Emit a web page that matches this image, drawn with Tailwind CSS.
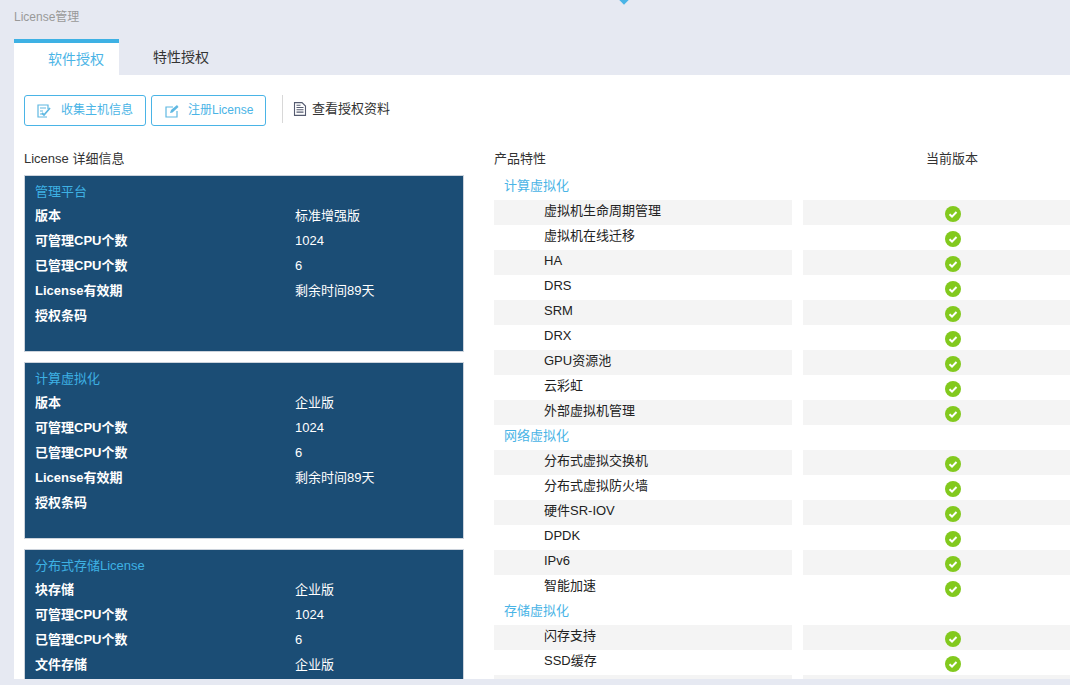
<!DOCTYPE html>
<html lang="zh-CN">
<head>
  <meta charset="UTF-8" />
  <title>License管理</title>
  <script src="https://cdn.jsdelivr.net/npm/@tailwindcss/browser@4"></script>
</head>
<body class="relative h-[685px] overflow-hidden bg-[#e6e9f2] font-['Liberation_Sans','Noto_Sans_CJK_SC',sans-serif] text-[13px] text-[#333]">

  <!-- marker at top -->
  <div class="absolute left-[620px] top-[-5px] h-2 w-2 rotate-45 bg-[#4ab4e6]"></div>

  <!-- Breadcrumb -->
  <div class="h-[39px] pl-[14px] pt-[9px] text-xs leading-[16px] text-[#999]">License管理</div>

  <!-- Tabs -->
  <div class="flex h-9 pl-[14px] text-sm">
    <div class="w-[105px] border-t-4 border-[#3eb1e4] bg-white pl-[34px] pt-[5px] leading-[23px] text-[#4ab4e6]">软件授权</div>
    <div class="pl-[34px] pt-[7px] leading-[23px] text-[#333]">特性授权</div>
  </div>

  <!-- Panel -->
  <div class="ml-[14px] h-[604px] overflow-hidden bg-white pl-[10px]">

    <!-- Toolbar -->
    <div class="flex items-start pt-5">
      <button class="flex h-[31px] w-[122px] items-center rounded-[3px] border border-[#4ab4e6] pl-[11px] text-xs text-[#4ab4e6]">
        <svg class="h-4 w-4" viewBox="0 0 16 16" fill="none" stroke="#5fb8e2" stroke-width="1.2"><path d="M12 6V2H2v12h9" /><path d="M4 5h6M4 8h3M4 11h3" /><path d="M6 10l2 2 6-7" stroke-width="1.8" /></svg>
        <span class="ml-[9px] pb-[2px]">收集主机信息</span>
      </button>
      <button class="ml-[5px] flex h-[31px] w-[115px] items-center rounded-[3px] border border-[#4ab4e6] pl-[12px] text-xs text-[#4ab4e6]">
        <svg class="h-4 w-4" viewBox="0 0 16 16" fill="none" stroke="#5fb8e2" stroke-width="1.2"><path d="M9 4H2v10h11V8" /><path d="M6 10l1-3 6-5 1.500 2-6 5.500z" fill="#5fb8e2" stroke="none" /></svg>
        <span class="ml-[8px] pb-[2px]">注册License</span>
      </button>
      <div class="ml-4 h-7 w-px bg-[#d8d8d8]"></div>
      <div class="ml-[10px] flex h-7 items-center text-[13px] text-[#333]">
        <svg class="h-[14px] w-[14px]" viewBox="0 0 14 14" fill="none" stroke="#555b70" stroke-width="1.1"><path d="M1.500.6h7.500l3.500 3.500v9.300h-11z" /><path d="M3.500 5.500h7M3.500 7.800h7M3.500 10.100h7M3.500 3.200h4" /></svg>
        <span class="ml-[5px]">查看授权资料</span>
      </div>
    </div>

    <div class="mt-6 flex">
      <!-- License details -->
      <div class="w-[440px] shrink-0">
        <div class="h-[25px] text-[13px] leading-[17px]">License 详细信息</div>

        <div class="mb-[10px] h-[177px] border border-[#ccd3dc] bg-[#1b4d75] pl-[10px] pt-[2px] leading-[25px] text-white">
          <div class="h-[25px] leading-[27px] text-[#3eb1e4]">管理平台</div>
          <div class="grid grid-cols-[260px_1fr]">
            <b>版本</b><span>标准增强版</span>
            <b>可管理CPU个数</b><span>1024</span>
            <b>已管理CPU个数</b><span>6</span>
            <b>License有效期</b><span>剩余时间89天</span>
            <b>授权条码</b><span></span>
          </div>
        </div>

        <div class="mb-[10px] h-[177px] border border-[#ccd3dc] bg-[#1b4d75] pl-[10px] pt-[2px] leading-[25px] text-white">
          <div class="h-[25px] leading-[27px] text-[#3eb1e4]">计算虚拟化</div>
          <div class="grid grid-cols-[260px_1fr]">
            <b>版本</b><span>企业版</span>
            <b>可管理CPU个数</b><span>1024</span>
            <b>已管理CPU个数</b><span>6</span>
            <b>License有效期</b><span>剩余时间89天</span>
            <b>授权条码</b><span></span>
          </div>
        </div>

        <div class="h-[177px] border border-[#ccd3dc] bg-[#1b4d75] pl-[10px] pt-[2px] leading-[25px] text-white">
          <div class="h-[25px] leading-[27px] text-[#3eb1e4]">分布式存储License</div>
          <div class="grid grid-cols-[260px_1fr]">
            <b>块存储</b><span>企业版</span>
            <b>可管理CPU个数</b><span>1024</span>
            <b>已管理CPU个数</b><span>6</span>
            <b>文件存储</b><span>企业版</span>
          </div>
        </div>
      </div>

      <!-- Feature table -->
      <div class="ml-[30px] w-[609px] shrink-0 leading-[25px]">
        <div class="grid h-[25px] grid-cols-[309px_1fr] leading-[17px]"><span>产品特性</span><span class="pr-[2px] text-center">当前版本</span></div>
        <div class="h-[25px] pl-[10px] leading-[21px] text-[#4ab4e6]">计算虚拟化</div>

        <div class="grid h-[25px] grid-cols-[298px_300px] gap-x-[11px]"><div class="bg-[#f4f4f4] pl-[50px] leading-[21px] text-[#222]">虚拟机生命周期管理</div><div class="flex justify-center bg-[#f4f4f4] pt-[6px]"><svg class="h-4 w-4" viewBox="0 0 16 16"><circle cx="8" cy="8" r="8" fill="#82c91e" /><path d="M4.500 8.300l2.500 2.300 4.500-4.600" fill="none" stroke="#fff" stroke-width="2" /></svg></div></div>
        <div class="grid h-[25px] grid-cols-[298px_300px] gap-x-[11px]"><div class="pl-[50px] leading-[21px] text-[#222]">虚拟机在线迁移</div><div class="flex justify-center pt-[6px]"><svg class="h-4 w-4" viewBox="0 0 16 16"><circle cx="8" cy="8" r="8" fill="#82c91e" /><path d="M4.500 8.300l2.500 2.300 4.500-4.600" fill="none" stroke="#fff" stroke-width="2" /></svg></div></div>
        <div class="grid h-[25px] grid-cols-[298px_300px] gap-x-[11px]"><div class="bg-[#f4f4f4] pl-[50px] leading-[21px] text-[#222]">HA</div><div class="flex justify-center bg-[#f4f4f4] pt-[6px]"><svg class="h-4 w-4" viewBox="0 0 16 16"><circle cx="8" cy="8" r="8" fill="#82c91e" /><path d="M4.500 8.300l2.500 2.300 4.500-4.600" fill="none" stroke="#fff" stroke-width="2" /></svg></div></div>
        <div class="grid h-[25px] grid-cols-[298px_300px] gap-x-[11px]"><div class="pl-[50px] leading-[21px] text-[#222]">DRS</div><div class="flex justify-center pt-[6px]"><svg class="h-4 w-4" viewBox="0 0 16 16"><circle cx="8" cy="8" r="8" fill="#82c91e" /><path d="M4.500 8.300l2.500 2.300 4.500-4.600" fill="none" stroke="#fff" stroke-width="2" /></svg></div></div>
        <div class="grid h-[25px] grid-cols-[298px_300px] gap-x-[11px]"><div class="bg-[#f4f4f4] pl-[50px] leading-[21px] text-[#222]">SRM</div><div class="flex justify-center bg-[#f4f4f4] pt-[6px]"><svg class="h-4 w-4" viewBox="0 0 16 16"><circle cx="8" cy="8" r="8" fill="#82c91e" /><path d="M4.500 8.300l2.500 2.300 4.500-4.600" fill="none" stroke="#fff" stroke-width="2" /></svg></div></div>
        <div class="grid h-[25px] grid-cols-[298px_300px] gap-x-[11px]"><div class="pl-[50px] leading-[21px] text-[#222]">DRX</div><div class="flex justify-center pt-[6px]"><svg class="h-4 w-4" viewBox="0 0 16 16"><circle cx="8" cy="8" r="8" fill="#82c91e" /><path d="M4.500 8.300l2.500 2.300 4.500-4.600" fill="none" stroke="#fff" stroke-width="2" /></svg></div></div>
        <div class="grid h-[25px] grid-cols-[298px_300px] gap-x-[11px]"><div class="bg-[#f4f4f4] pl-[50px] leading-[21px] text-[#222]">GPU资源池</div><div class="flex justify-center bg-[#f4f4f4] pt-[6px]"><svg class="h-4 w-4" viewBox="0 0 16 16"><circle cx="8" cy="8" r="8" fill="#82c91e" /><path d="M4.500 8.300l2.500 2.300 4.500-4.600" fill="none" stroke="#fff" stroke-width="2" /></svg></div></div>
        <div class="grid h-[25px] grid-cols-[298px_300px] gap-x-[11px]"><div class="pl-[50px] leading-[21px] text-[#222]">云彩虹</div><div class="flex justify-center pt-[6px]"><svg class="h-4 w-4" viewBox="0 0 16 16"><circle cx="8" cy="8" r="8" fill="#82c91e" /><path d="M4.500 8.300l2.500 2.300 4.500-4.600" fill="none" stroke="#fff" stroke-width="2" /></svg></div></div>
        <div class="grid h-[25px] grid-cols-[298px_300px] gap-x-[11px]"><div class="bg-[#f4f4f4] pl-[50px] leading-[21px] text-[#222]">外部虚拟机管理</div><div class="flex justify-center bg-[#f4f4f4] pt-[6px]"><svg class="h-4 w-4" viewBox="0 0 16 16"><circle cx="8" cy="8" r="8" fill="#82c91e" /><path d="M4.500 8.300l2.500 2.300 4.500-4.600" fill="none" stroke="#fff" stroke-width="2" /></svg></div></div>

        <div class="h-[25px] pl-[10px] leading-[21px] text-[#4ab4e6]">网络虚拟化</div>
        <div class="grid h-[25px] grid-cols-[298px_300px] gap-x-[11px]"><div class="bg-[#f4f4f4] pl-[50px] leading-[21px] text-[#222]">分布式虚拟交换机</div><div class="flex justify-center bg-[#f4f4f4] pt-[6px]"><svg class="h-4 w-4" viewBox="0 0 16 16"><circle cx="8" cy="8" r="8" fill="#82c91e" /><path d="M4.500 8.300l2.500 2.300 4.500-4.600" fill="none" stroke="#fff" stroke-width="2" /></svg></div></div>
        <div class="grid h-[25px] grid-cols-[298px_300px] gap-x-[11px]"><div class="pl-[50px] leading-[21px] text-[#222]">分布式虚拟防火墙</div><div class="flex justify-center pt-[6px]"><svg class="h-4 w-4" viewBox="0 0 16 16"><circle cx="8" cy="8" r="8" fill="#82c91e" /><path d="M4.500 8.300l2.500 2.300 4.500-4.600" fill="none" stroke="#fff" stroke-width="2" /></svg></div></div>
        <div class="grid h-[25px] grid-cols-[298px_300px] gap-x-[11px]"><div class="bg-[#f4f4f4] pl-[50px] leading-[21px] text-[#222]">硬件SR-IOV</div><div class="flex justify-center bg-[#f4f4f4] pt-[6px]"><svg class="h-4 w-4" viewBox="0 0 16 16"><circle cx="8" cy="8" r="8" fill="#82c91e" /><path d="M4.500 8.300l2.500 2.300 4.500-4.600" fill="none" stroke="#fff" stroke-width="2" /></svg></div></div>
        <div class="grid h-[25px] grid-cols-[298px_300px] gap-x-[11px]"><div class="pl-[50px] leading-[21px] text-[#222]">DPDK</div><div class="flex justify-center pt-[6px]"><svg class="h-4 w-4" viewBox="0 0 16 16"><circle cx="8" cy="8" r="8" fill="#82c91e" /><path d="M4.500 8.300l2.500 2.300 4.500-4.600" fill="none" stroke="#fff" stroke-width="2" /></svg></div></div>
        <div class="grid h-[25px] grid-cols-[298px_300px] gap-x-[11px]"><div class="bg-[#f4f4f4] pl-[50px] leading-[21px] text-[#222]">IPv6</div><div class="flex justify-center bg-[#f4f4f4] pt-[6px]"><svg class="h-4 w-4" viewBox="0 0 16 16"><circle cx="8" cy="8" r="8" fill="#82c91e" /><path d="M4.500 8.300l2.500 2.300 4.500-4.600" fill="none" stroke="#fff" stroke-width="2" /></svg></div></div>
        <div class="grid h-[25px] grid-cols-[298px_300px] gap-x-[11px]"><div class="pl-[50px] leading-[21px] text-[#222]">智能加速</div><div class="flex justify-center pt-[6px]"><svg class="h-4 w-4" viewBox="0 0 16 16"><circle cx="8" cy="8" r="8" fill="#82c91e" /><path d="M4.500 8.300l2.500 2.300 4.500-4.600" fill="none" stroke="#fff" stroke-width="2" /></svg></div></div>

        <div class="h-[25px] pl-[10px] leading-[21px] text-[#4ab4e6]">存储虚拟化</div>
        <div class="grid h-[25px] grid-cols-[298px_300px] gap-x-[11px]"><div class="bg-[#f4f4f4] pl-[50px] leading-[21px] text-[#222]">闪存支持</div><div class="flex justify-center bg-[#f4f4f4] pt-[6px]"><svg class="h-4 w-4" viewBox="0 0 16 16"><circle cx="8" cy="8" r="8" fill="#82c91e" /><path d="M4.500 8.300l2.500 2.300 4.500-4.600" fill="none" stroke="#fff" stroke-width="2" /></svg></div></div>
        <div class="grid h-[25px] grid-cols-[298px_300px] gap-x-[11px]"><div class="pl-[50px] leading-[21px] text-[#222]">SSD缓存</div><div class="flex justify-center pt-[6px]"><svg class="h-4 w-4" viewBox="0 0 16 16"><circle cx="8" cy="8" r="8" fill="#82c91e" /><path d="M4.500 8.300l2.500 2.300 4.500-4.600" fill="none" stroke="#fff" stroke-width="2" /></svg></div></div>
        <div class="grid h-[25px] grid-cols-[298px_300px] gap-x-[11px]"><div class="bg-[#f4f4f4]"></div><div class="bg-[#f4f4f4]"></div></div>
      </div>
    </div>
  </div>
</body>
</html>
